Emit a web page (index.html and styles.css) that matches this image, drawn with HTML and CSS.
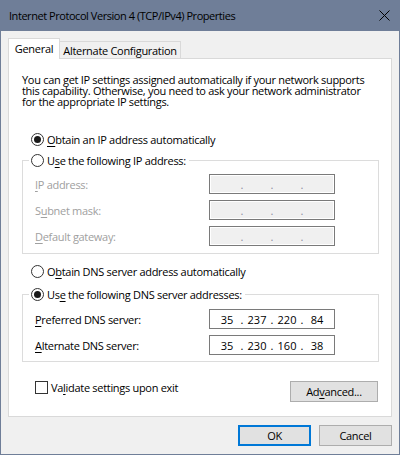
FILE: index.html
```html
<!DOCTYPE html>
<html>
<head>
<meta charset="utf-8">
<link rel="stylesheet" href="styles.css">
</head>
<body>
<div class="window">
  <div class="titlebar">
    <span class="title">Internet Protocol Version 4 (TCP/IPv4) Properties</span>
    <svg class="close" width="11" height="11" viewBox="0 0 11 11"><path d="M0.5 0.5L10.5 10.5M10.5 0.5L0.5 10.5" stroke="#000" stroke-width="1" fill="none"/></svg>
  </div>
  <div class="client">
    <div class="tabs">
      <div class="tab tab-active">General</div>
      <div class="tab tab-idle">Alternate Configuration</div>
    </div>
    <div class="panel">
      <p class="intro">You can get IP settings assigned automatically if your network supports<br>this capability. Otherwise, you need to ask your network administrator<br>for the appropriate IP settings.</p>
      <div class="option option-ip"><span class="radio checked"></span><span><u>O</u>btain an IP address automatically</span></div>
      <div class="group group-ip">
        <div class="group-head"><span class="radio"></span><span>U<u>s</u>e the following IP address:</span></div>
        <div class="field disabled"><span class="label"><u>I</u>P address:</span><div class="ipbox"><span class="seg"></span><span class="dot">.</span><span class="seg"></span><span class="dot">.</span><span class="seg"></span><span class="dot">.</span><span class="seg"></span></div></div>
        <div class="field disabled"><span class="label">S<u>u</u>bnet mask:</span><div class="ipbox"><span class="seg"></span><span class="dot">.</span><span class="seg"></span><span class="dot">.</span><span class="seg"></span><span class="dot">.</span><span class="seg"></span></div></div>
        <div class="field disabled"><span class="label"><u>D</u>efault gateway:</span><div class="ipbox"><span class="seg"></span><span class="dot">.</span><span class="seg"></span><span class="dot">.</span><span class="seg"></span><span class="dot">.</span><span class="seg"></span></div></div>
      </div>
      <div class="option option-dns"><span class="radio"></span><span>O<u>b</u>tain DNS server address automatically</span></div>
      <div class="group group-dns">
        <div class="group-head"><span class="radio checked"></span><span>Us<u>e</u> the following DNS server addresses:</span></div>
        <div class="field"><span class="label"><u>P</u>referred DNS server:</span><div class="ipbox"><span class="seg">35</span><span class="dot">.</span><span class="seg">237</span><span class="dot">.</span><span class="seg">220</span><span class="dot">.</span><span class="seg">84</span></div></div>
        <div class="field"><span class="label"><u>A</u>lternate DNS server:</span><div class="ipbox"><span class="seg">35</span><span class="dot">.</span><span class="seg">230</span><span class="dot">.</span><span class="seg">160</span><span class="dot">.</span><span class="seg">38</span></div></div>
      </div>
      <div class="bottom-row">
        <div class="check-wrap"><span class="checkbox"></span><span>Va<u>l</u>idate settings upon exit</span></div>
        <div class="btn btn-adv">Ad<u>v</u>anced...</div>
      </div>
    </div>
    <div class="buttons">
      <div class="btn btn-ok">OK</div>
      <div class="btn btn-cancel">Cancel</div>
    </div>
  </div>
</div>
</body>
</html>
```
FILE: styles.css
```css
* { box-sizing: border-box; }
html, body { margin: 0; padding: 0; }
body {
  width: 400px;
  height: 455px;
  font-family: "Open Sans", "Noto Sans", sans-serif;
  font-size: 11px;
  letter-spacing: -0.3px;
  color: #000;
  background: #f0f0f0;
}
u { text-decoration-thickness: 1px; text-underline-offset: 2px; }
.window {
  width: 400px;
  height: 455px;
  border: 1px solid #6f7e98;
  border-top: 0;
  display: flex;
  flex-direction: column;
  background: #f0f0f0;
}
.titlebar {
  height: 31px;
  margin: 0 -1px;
  padding: 0 10px 0 9px;
  background: #6f7e98;
  display: flex;
  align-items: center;
  justify-content: space-between;
  flex: none;
}
.title { color: #000; white-space: nowrap; letter-spacing: -0.45px; }
.close { display: block; }
.client {
  flex: 1;
  display: flex;
  flex-direction: column;
}
.tabs {
  display: flex;
  align-items: flex-end;
  padding: 7px 0 0 7px;
  height: 27px;
}
.tab {
  border: 1px solid #d9d9d9;
  border-bottom: 0;
  display: flex;
  align-items: center;
  justify-content: center;
  white-space: nowrap;
}
.tab-active {
  width: 52px;
  height: 21px;
  margin-bottom: -1px;
  background: #fff;
  position: relative;
  z-index: 1;
  padding-bottom: 1px;
}
.tab-idle {
  width: 122px;
  height: 17px;
  margin-left: -1px;
  background: #f0f0f0;
  padding-top: 1px;
}
.panel {
  margin: 0 7px;
  height: 359px;
  border: 1px solid #d9d9d9;
  background: #fff;
  padding: 15px 12px 0 13px;
}
.intro {
  margin: 0;
  line-height: 11px;
  white-space: nowrap;
}
.option, .group-head, .check-wrap {
  display: flex;
  align-items: center;
  height: 15px;
  white-space: nowrap;
}
.option { padding-left: 9px; }
.option-ip { margin-top: 25px; }
.option-dns { margin-top: 10px; }
.radio {
  width: 13px;
  height: 13px;
  border: 1px solid #333;
  border-radius: 50%;
  background: #fff;
  margin-right: 3px;
  flex: none;
  display: flex;
  align-items: center;
  justify-content: center;
}
.radio.checked::after {
  content: "";
  width: 7px;
  height: 7px;
  border-radius: 50%;
  background: #1a1a1a;
}
.group {
  border: 1px solid #dcdcdc;
  padding: 0 0 7px 12px;
}
.group-ip { margin-top: 13px; }
.group-dns { margin-top: 15px; padding-bottom: 6px; }
.group-head {
  width: fit-content;
  margin: -8px 0 0 -6px;
  padding: 0 3px 0 2px;
  background: #fff;
}
.field {
  display: flex;
  align-items: center;
  height: 20px;
  margin-top: 6px;
}
.group-dns .group-head + .field { margin-top: 7px; }
.label { flex: 0 0 174px; white-space: nowrap; }
.disabled .label { color: #a0a0a0; }
.ipbox {
  width: 126px;
  height: 20px;
  border: 1px solid #7a7a7a;
  background: #fff;
  display: flex;
  align-items: center;
  padding-left: 2px;
  letter-spacing: 0;
}
.disabled .ipbox {
  background: #f0f0f0;
  box-shadow: inset 0 0 0 1px #fff;
  color: #8c8ca0;
}
.seg {
  width: 30px;
  text-align: center;
}
.dot {
  width: 0;
  display: flex;
  justify-content: center;
}
.bottom-row {
  margin-top: 19px;
  display: flex;
  justify-content: space-between;
  align-items: flex-start;
  padding: 0 1px 0 13px;
}
.check-wrap { height: 13px; }
.checkbox {
  width: 13px;
  height: 13px;
  border: 1px solid #333;
  background: #fff;
  margin-right: 3px;
}
.btn {
  height: 21px;
  background: #e1e1e1;
  border: 1px solid #adadad;
  display: flex;
  align-items: center;
  justify-content: center;
  white-space: nowrap;
}
.btn-adv { width: 88px; }
.buttons {
  display: flex;
  justify-content: flex-end;
  gap: 8px;
  margin-top: 8px;
  padding-right: 7px;
}
.btn-ok { width: 73px; border: 2px solid #0078d7; }
.btn-cancel { width: 73px; }
```
